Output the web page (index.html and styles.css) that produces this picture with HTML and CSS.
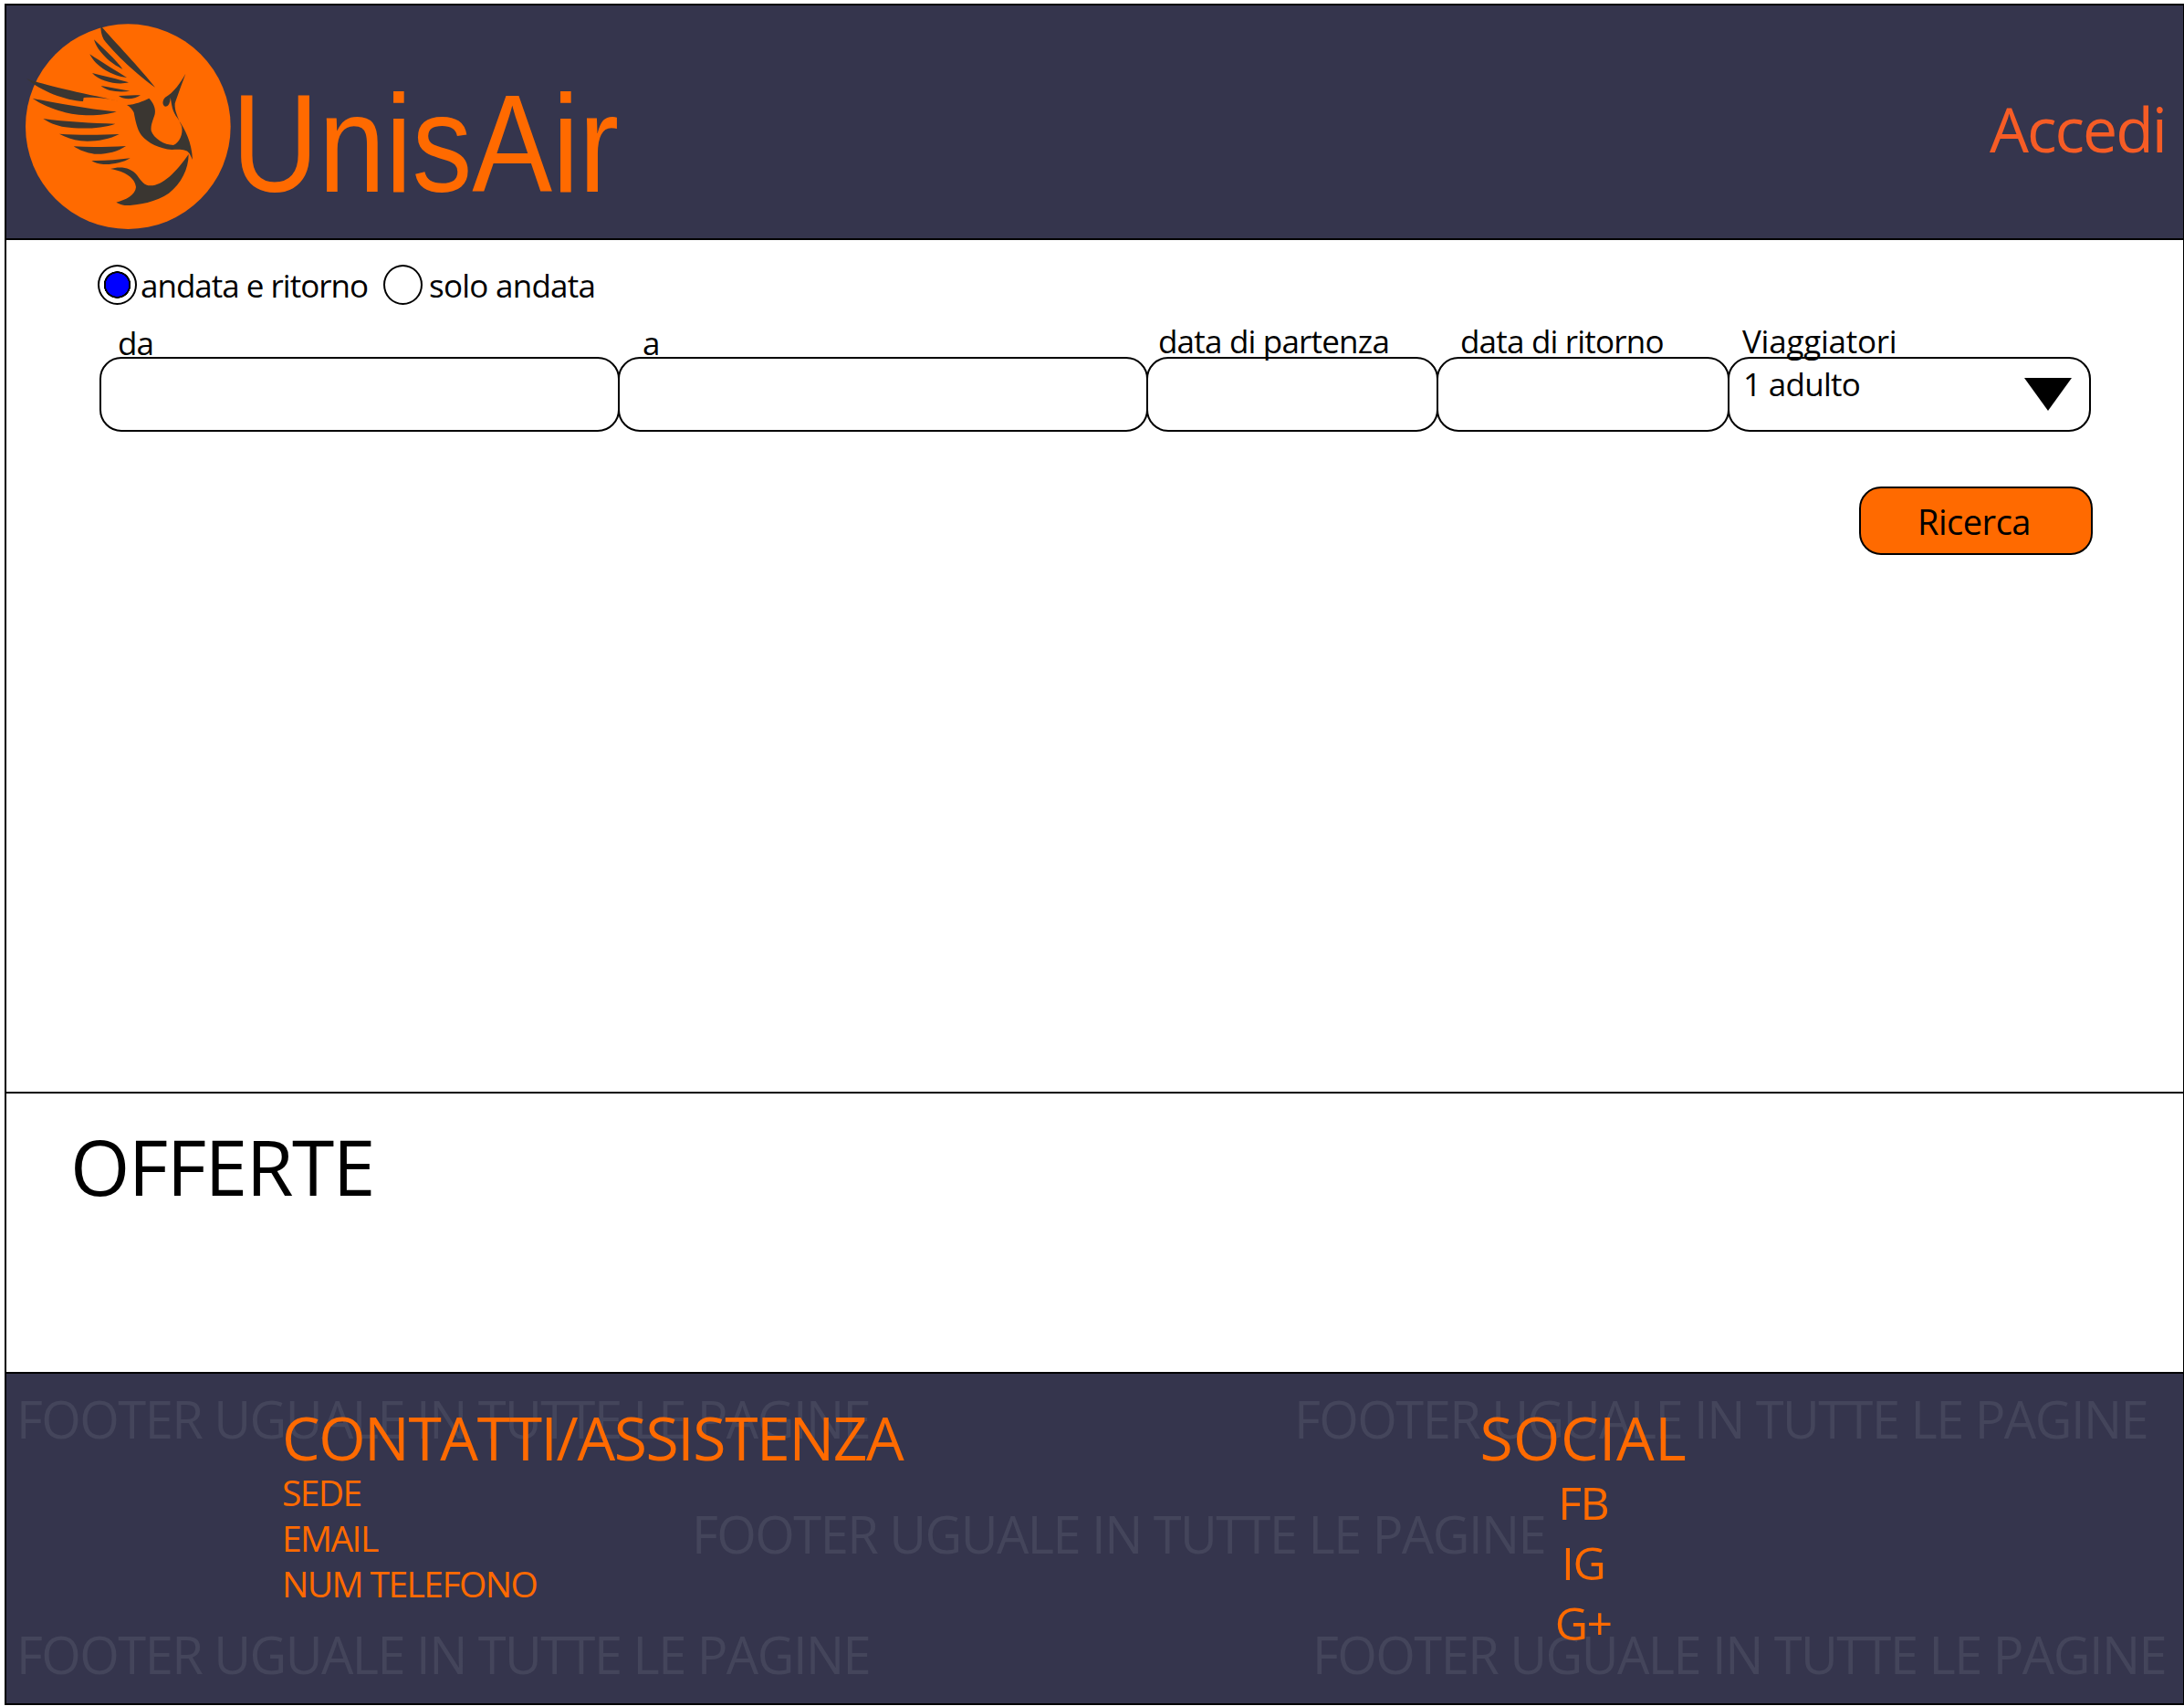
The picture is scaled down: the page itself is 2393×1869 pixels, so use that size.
FILE: index.html
```html
<!DOCTYPE html>
<html lang="it">
<head>
<meta charset="utf-8">
<title>UnisAir</title>
<link rel="stylesheet" href="styles.css">
</head>
<body>
<div class="frame">
  <header class="topbar">
    <div class="brand">
      <svg class="logo" viewBox="0 0 750 750" aria-hidden="true">
        <circle cx="376" cy="371" r="337" fill="#ff6a00"/>
        <g fill="#3a3631">
          <path d="M286 40 C330 90 420 185 465 242 C410 205 330 130 296 85 C288 70 286 55 286 40Z"/>
          <path d="M264 85 C295 115 335 150 358 182 C320 165 275 125 264 85Z"/>
          <path d="M250 133 C290 160 340 190 372 210 C325 205 270 175 250 133Z"/>
          <path d="M258 195 C295 205 345 215 378 226 C345 235 285 225 258 195Z"/>
          <path d="M287 237 C315 242 350 248 382 254 C350 260 305 255 287 237Z"/>
          <path d="M345 270 C370 270 395 268 417 268 C395 282 365 285 345 270Z"/>
          <path d="M42 213 C100 235 210 258 350 288 C300 276 260 274 230 276 L228 288 C170 285 90 255 42 213Z"/>
          <path d="M62 278 C130 292 240 312 338 322 C290 338 210 338 160 322 C125 312 85 295 62 278Z"/>
          <path d="M97 345 C170 355 260 360 334 362 C290 378 220 380 170 373 C140 368 115 358 97 345Z"/>
          <path d="M150 395 C220 400 290 398 347 396 C310 415 260 422 220 418 C195 414 170 406 150 395Z"/>
          <path d="M197 436 C250 440 310 438 369 435 C340 455 300 463 265 461 C240 458 215 448 197 436Z"/>
          <path d="M256 483 C300 484 340 480 383 475 C360 490 320 497 295 495 C280 494 265 490 256 483Z"/>
          <path d="M372 300 C400 298 425 288 445 278 C458 292 468 310 464 330 C458 350 450 365 452 385 C460 410 495 432 525 432 C545 425 558 395 552 370 C540 340 528 320 530 295 C540 265 555 225 565 197 C550 225 525 260 498 275 C488 285 488 300 498 305 C510 305 515 290 515 275 C520 300 520 320 540 345 C565 385 585 420 588 480 L578 460 C570 445 545 445 520 447 C480 445 440 425 420 400 C405 380 400 350 395 325 C390 315 382 305 372 300Z"/>
          <path d="M318 510 C350 500 385 505 405 530 C420 550 428 565 450 565 C490 565 535 520 575 462 C575 510 550 560 510 590 C470 618 410 630 365 630 C355 628 345 624 337 620 C370 612 400 595 402 570 C400 540 365 518 318 510Z"/>
        </g>
      </svg>
      <span class="wordmark">UnisAir</span>
    </div>
    <a class="login">Accedi</a>
  </header>

  <main class="search">
    <div class="trip">
      <span class="radio radio-on"></span><span class="trip-label">andata e ritorno</span>
      <span class="radio radio-second"></span><span class="trip-label trip-label-second">solo andata</span>
    </div>
    <div class="fields">
      <div class="field field-from"><span class="cap cap-from">da</span></div>
      <div class="field field-to"><span class="cap cap-to">a</span></div>
      <div class="field field-dep"><span class="cap cap-dep">data di partenza</span></div>
      <div class="field field-ret"><span class="cap cap-ret">data di ritorno</span></div>
      <div class="field field-pax">
        <span class="cap cap-pax">Viaggiatori</span>
        <span class="pax-value">1 adulto</span>
        <span class="arrow"></span>
      </div>
    </div>
    <div class="actions"><button class="btn">Ricerca</button></div>
  </main>

  <section class="offers"><h2 class="offers-title">OFFERTE</h2></section>

  <footer class="footer">
    <span class="mark mark-a">FOOTER UGUALE IN TUTTE LE PAGINE</span>
    <span class="mark mark-b">FOOTER UGUALE IN TUTTE LE PAGINE</span>
    <span class="mark mark-c">FOOTER UGUALE IN TUTTE LE PAGINE</span>
    <span class="mark mark-d">FOOTER UGUALE IN TUTTE LE PAGINE</span>
    <span class="mark mark-e">FOOTER UGUALE IN TUTTE LE PAGINE</span>
    <div class="contact">
      <h3 class="foot-title">CONTATTI/ASSISTENZA</h3>
      <p class="contact-row">SEDE</p>
      <p class="contact-row">EMAIL</p>
      <p class="contact-row">NUM TELEFONO</p>
    </div>
    <div class="social">
      <h3 class="foot-title foot-title-social">SOCIAL</h3>
      <p class="social-row">FB</p>
      <p class="social-row">IG</p>
      <p class="social-row">G+</p>
    </div>
  </footer>
</div>
</body>
</html>
```
FILE: styles.css
```css
* { box-sizing: border-box; }
html, body { margin: 0; padding: 0; background: #fff; }
body { font-family: "Open Sans", "Noto Sans", sans-serif; color: #000; }
.frame {
  width: 2393px;
  height: 1869px;
  padding: 4px 0 1px 5px;
  display: flex;
  flex-direction: column;
  overflow: hidden;
}
.topbar {
  height: 259px;
  flex: none;
  background: #35354d;
  border: 2px solid #000;
  border-right-width: 1px;
  display: flex;
  justify-content: space-between;
}
.brand { display: flex; align-items: flex-start; }
.logo { width: 250px; height: 250px; margin: 9px 0 0 8px; flex: none; }
.wordmark {
  font-family: "Liberation Sans", Arial, sans-serif;
  font-size: 152px;
  line-height: 1;
  color: #ff6a00;
  margin: 75px 0 0 -11px;
  transform: scaleX(0.866);
  transform-origin: left top;
}
.login {
  font-size: 68px;
  letter-spacing: -2px;
  line-height: 1;
  color: #f65c25;
  margin: 101px 19px 0 0;
}
.search {
  height: 933px;
  flex: none;
  border-left: 2px solid #000;
  border-right: 1px solid #000;
  padding: 27px 0 0 100px;
}
.trip { display: flex; align-items: center; height: 44px; }
.radio {
  width: 43px;
  height: 44px;
  flex: none;
  border-radius: 50%;
  border: 2px solid #000;
  background: #fff;
  display: block;
}
.radio-on { background: radial-gradient(circle, #0000ff 0 12.5px, #000 13px 14.5px, #fff 15px); }
.radio-second { margin-left: 17px; }
.trip-label { font-size: 35px; letter-spacing: -1px; margin-left: 4px; }
.trip-label-second { margin-left: 7px; letter-spacing: -0.75px; }
.fields { display: flex; margin: 57px 0 0 2px; }
.field {
  position: relative;
  height: 82px;
  border: 2px solid #000;
  border-radius: 24px;
  margin-right: -2px;
  flex: none;
}
.field-from { width: 570px; }
.field-to { width: 581px; }
.field-dep { width: 320px; }
.field-ret { width: 321px; }
.field-pax { width: 398px; }
.cap {
  position: absolute;
  top: -43px;
  font-size: 35px;
  line-height: 48px;
  letter-spacing: -0.8px;
  white-space: nowrap;
}
.cap-from { left: 18px; top: -41px; }
.cap-to { left: 25px; top: -41px; }
.cap-dep { left: 11px; }
.cap-ret { left: 24px; }
.cap-pax { left: 14px; letter-spacing: -0.25px; }
.pax-value {
  position: absolute;
  left: 15px;
  top: 4px;
  font-size: 35px;
  line-height: 48px;
  letter-spacing: -0.7px;
}
.arrow {
  position: absolute;
  right: 19px;
  top: 21px;
  border-left: 26px solid transparent;
  border-right: 26px solid transparent;
  border-top: 36px solid #000;
}
.actions { margin-top: 60px; padding-right: 99px; display: flex; justify-content: flex-end; }
.btn {
  width: 256px;
  height: 75px;
  background: #ff6a00;
  border: 2px solid #000;
  border-radius: 24px;
  font: 400 38px "Open Sans", sans-serif;
  letter-spacing: -0.5px;
  color: #000;
  padding: 0 4px 0 0;
}
.offers {
  height: 307px;
  flex: none;
  border: 1px solid #000;
  border-width: 2px 1px 0 2px;
  padding: 35px 0 0 70px;
}
.offers-title {
  margin: 0;
  font-size: 84px;
  line-height: 90px;
  font-weight: 400;
  letter-spacing: -1.5px;
}
.footer {
  flex: 1;
  position: relative;
  background: #35354d;
  border: 2px solid #000;
  border-right-width: 1px;
  display: flex;
  color: #ff6a00;
  padding: 33px 0 0 302px;
}
.mark {
  position: absolute;
  font-size: 56px;
  line-height: 64px;
  letter-spacing: -1.55px;
  color: #44455b;
  white-space: nowrap;
}
.mark-a { left: 11px; top: 17px; }
.mark-b { left: 1411px; top: 17px; }
.mark-c { left: 751px; top: 143px; }
.mark-d { left: 11px; top: 275px; }
.mark-e { left: 1431px; top: 275px; }
.contact, .social { position: relative; display: flex; flex-direction: column; }
.foot-title {
  margin: 0;
  font-size: 66px;
  line-height: 72px;
  font-weight: 400;
  letter-spacing: -1.4px;
}
.foot-title-social { letter-spacing: 0.5px; }
.contact-row {
  margin: 0;
  font-size: 39px;
  line-height: 50px;
  letter-spacing: -1.6px;
}
.contact-row:first-of-type { margin-top: 0; }
.social { margin-left: 632px; align-items: center; }
.social-row {
  margin: 0;
  font-size: 50px;
  line-height: 66px;
  letter-spacing: -1.5px;
}
.social-row:first-of-type { margin-top: 3px; }
```
